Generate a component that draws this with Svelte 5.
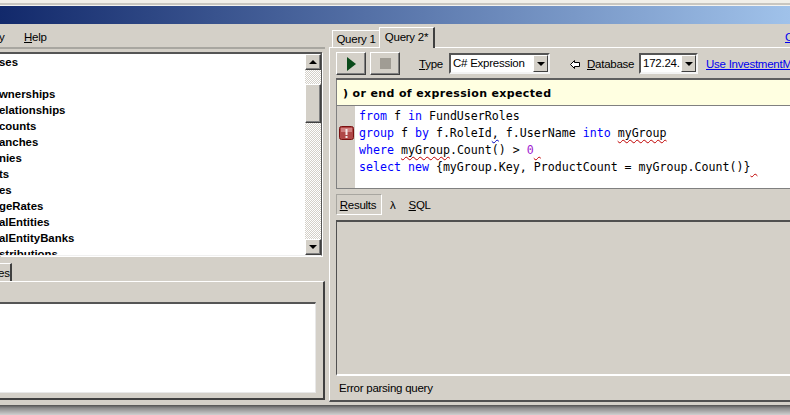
<script>
  const tables = [
    'ses', '', 'wnerships', 'elationships', 'counts', 'anches', 'nies', 'ts', 'es',
    'geRates', 'alEntities', 'alEntityBanks', 'stributions',
  ];
</script>

<div class="window">
  <div class="top-strip"></div>
  <div class="titlebar"></div>

  <div class="body">
    <div class="left">
      <div class="menu">
        <span class="menu-cut">y</span>
        <span class="menu-help"><u>H</u>elp</span>
      </div>

      <div class="list-box">
        <div class="list">
          {#each tables as name}
            <div class="row">{name}</div>
          {/each}
        </div>
        <div class="scrollbar">
          <div class="sb-btn"><span class="arrow-up"></span></div>
          <div class="sb-track">
            <div class="sb-thumb"></div>
          </div>
          <div class="sb-btn"><span class="arrow-down"></span></div>
        </div>
      </div>

      <div class="left-tabs">
        <div class="left-tab">es</div>
      </div>
      <div class="left-panel">
        <div class="left-white"></div>
      </div>
    </div>

    <div class="right">
      <div class="tabs">
        <div class="tab">Query 1</div>
        <div class="tab tab--active">Query 2*</div>
        <a class="corner-link" href="#top">C</a>
      </div>

      <div class="panel">
        <div class="toolbar">
          <button class="tool" type="button" aria-label="Run"><span class="play"></span></button>
          <button class="tool" type="button" aria-label="Stop"><span class="stop"></span></button>
          <span class="label label--type"><u>T</u>ype</span>
          <div class="combo combo--type">
            <span class="combo-text">C# Expression</span>
            <span class="combo-btn"><span class="arrow-down"></span></span>
          </div>
          <svg class="back" width="10" height="9" viewBox="0 0 10 9">
            <path d="M4.5 .5 L.5 4.5 L4.5 8.5 V6.5 H9.5 V2.5 H4.5 Z" fill="#fff" stroke="#000" stroke-width="1" />
          </svg>
          <span class="label label--db"><u>D</u>atabase</span>
          <div class="combo combo--db">
            <span class="combo-text">172.24.</span>
            <span class="combo-btn"><span class="arrow-down"></span></span>
          </div>
          <a class="use-link" href="#top">Use InvestmentManagement</a>
        </div>

        <div class="message">) or end of expression expected</div>

        <div class="editor">
          <div class="gutter">
            <svg class="err-icon" width="15" height="14" viewBox="0 0 15 14">
              <rect x=".5" y=".5" width="14" height="13" rx="2" fill="#b04848" stroke="#7a1010" />
              <rect x="2" y="2" width="11" height="4" fill="#d08080" />
              <rect x="6.5" y="3" width="2" height="6" fill="#f4e8e8" />
              <rect x="6.5" y="10" width="2" height="2" fill="#f4e8e8" />
            </svg>
          </div>
          <pre class="code"><span class="kw">from</span> f <span class="kw">in</span> FundUserRoles
<span class="kw">group</span> f <span class="kw">by</span> f.RoleId<span class="warn">,</span> f.UserName <span class="kw">into</span> <span class="err">myGroup</span>
<span class="kw">where</span> <span class="err">myGroup</span>.Count() &gt; <span class="num">0</span><span class="err">&nbsp;</span>
<span class="kw">select</span> <span class="kw">new</span> {'{'}myGroup.Key, ProductCount = myGroup.Count(){'}'}<span class="err">&nbsp;</span></pre>
        </div>

        <div class="result-tabs">
          <div class="rtab rtab--active"><u>R</u>esults</div>
          <div class="rtab rtab--lambda">λ</div>
          <div class="rtab"><u>S</u>QL</div>
        </div>

        <div class="results"></div>
        <div class="status">Error parsing query</div>
      </div>
    </div>
  </div>

  <div class="bottom-shadow"></div>
</div>

<style>
  :global(body) {
    margin: 0;
    background: #d4d0c8;
  }

  .window {
    width: 790px;
    height: 415px;
    overflow: hidden;
    display: flex;
    flex-direction: column;
    background: #d4d0c8;
    font-family: "Liberation Sans", Arial, sans-serif;
    font-size: 11.5px;
    letter-spacing: -0.25px;
    color: #000;
  }

  .top-strip {
    height: 3px;
    padding-bottom: 2px;
    border-bottom: 1px solid #f4f3ef;
    background: #f1efe9;
    box-shadow: inset 0 -2px 0 #c8c6c0;
  }

  .titlebar {
    height: 18px;
    background: linear-gradient(90deg, #12296b, #a0c2ea);
  }

  .body {
    display: flex;
    height: 378px;
  }

  /* left side: table tree + bottom tab panel */
  .left {
    width: 329px;
    flex: none;
    box-sizing: border-box;
  }

  .menu {
    height: 25px;
    box-sizing: border-box;
    display: flex;
    align-items: center;
    padding-top: 3px;
    border-bottom: 2px solid #a8a6a0;
    margin-right: 4px;
  }

  .menu-cut {
    width: 25px;
    margin-left: -1px;
  }

  .list-box {
    display: flex;
    height: 204px;
    width: 322px;
    margin-top: 3px;
    box-sizing: border-box;
    background: #fff;
    border-top: 2px solid #555;
    border-right: 1px solid #555;
    border-bottom: 1px solid #f0f0f0;
    box-shadow: 1px 1px 0 #fff;
  }

  .list {
    flex: 1;
    overflow: hidden;
    font-weight: 700;
    font-size: 11.4px;
    letter-spacing: 0;
  }

  .row {
    height: 16px;
    line-height: 16px;
    margin-left: -1px;
  }

  .scrollbar {
    width: 16px;
    display: flex;
    flex-direction: column;
  }

  .sb-btn {
    height: 16px;
    flex: none;
    box-sizing: border-box;
    background: #d4d0c8;
    border: 1px solid;
    border-color: #fff #404040 #404040 #fff;
    box-shadow: inset -1px -1px 0 #808080;
    display: flex;
    align-items: center;
    justify-content: center;
  }

  .sb-track {
    flex: 1;
    padding-top: 14px;
    background: repeating-conic-gradient(#fff 0 25%, #d4d0c8 0 50%) 0 0 / 2px 2px;
  }

  .sb-thumb {
    height: 39px;
    box-sizing: border-box;
    background: #d4d0c8;
    border: 1px solid;
    border-color: #fff #404040 #404040 #fff;
    box-shadow: inset -1px -1px 0 #808080;
  }

  .arrow-up,
  .arrow-down {
    width: 0;
    height: 0;
    border-left: 4px solid transparent;
    border-right: 4px solid transparent;
  }

  .arrow-up {
    border-bottom: 4px solid #000;
  }

  .arrow-down {
    border-top: 4px solid #000;
  }

  .left-tabs {
    height: 25px;
    display: flex;
    align-items: flex-end;
  }

  .left-tab {
    width: 12px;
    height: 18px;
    line-height: 19px;
    box-sizing: border-box;
    text-indent: -2px;
    border-top: 1px solid #fff;
    border-right: 2px solid #404040;
    overflow: hidden;
  }

  .left-panel {
    width: 325px;
    height: 119px;
    box-sizing: border-box;
    padding: 20px 7px 6px 0;
    border-top: 1px solid #fff;
    border-right: 2px solid #404040;
    border-bottom: 2px solid #404040;
  }

  .left-white {
    height: 91px;
    box-sizing: border-box;
    background: #fff;
    border-top: 2px solid #555;
    border-right: 1px solid #e8e8e8;
    border-bottom: 1px solid #e8e8e8;
  }

  /* right side: query tabs */
  .right {
    flex: 1;
    min-width: 0;
    display: flex;
    flex-direction: column;
  }

  .tabs {
    height: 23px;
    flex: none;
    display: flex;
    align-items: flex-end;
    padding-left: 3px;
    position: relative;
  }

  .tab {
    height: 17px;
    line-height: 16px;
    width: 47px;
    box-sizing: border-box;
    text-align: center;
    border-top: 1px solid #fff;
    border-left: 1px solid #fff;
  }

  .tab--active {
    height: 21px;
    width: 56px;
    line-height: 19px;
    margin-bottom: -1px;
    background: #d4d0c8;
    border-right: 2px solid #404040;
    position: relative;
    z-index: 1;
  }

  .corner-link {
    position: absolute;
    left: 456px;
    top: 7px;
    color: #0000ee;
  }

  .panel {
    flex: 1;
    min-height: 0;
    box-sizing: border-box;
    border-top: 1px solid #fff;
    border-left: 1px solid #fff;
    border-bottom: 2px solid #505050;
    padding-left: 6px;
    display: flex;
    flex-direction: column;
  }

  .toolbar {
    height: 30px;
    flex: none;
    display: flex;
    align-items: flex-start;
    padding-top: 4px;
    box-sizing: border-box;
    white-space: nowrap;
    overflow: hidden;
  }

  .toolbar > * {
    flex: none;
  }

  .tool {
    width: 30px;
    height: 23px;
    margin: 0 4px 0 0;
    padding: 0;
    box-sizing: border-box;
    background: #d4d0c8;
    border: 1px solid;
    border-color: #fff #404040 #404040 #fff;
    box-shadow: inset -1px -1px 0 #808080;
    display: flex;
    align-items: center;
    justify-content: center;
  }

  .play {
    width: 0;
    height: 0;
    border-left: 9px solid #0a4a1a;
    border-top: 7px solid transparent;
    border-bottom: 7px solid transparent;
  }

  .stop {
    width: 11px;
    height: 11px;
    background: #a09c94;
  }

  .label {
    line-height: 25px;
  }

  .label--type {
    margin-left: 15px;
    width: 30px;
  }

  .combo {
    height: 21px;
    margin-top: 1px;
    box-sizing: border-box;
    display: flex;
    justify-content: space-between;
    background: #fff;
    border: 2px solid;
    border-color: #555 #f4f4f4 #f4f4f4 #555;
    line-height: 17px;
    overflow: hidden;
  }

  .combo--type {
    width: 101px;
  }

  .combo--db {
    width: 59px;
  }

  .combo-text {
    padding-left: 2px;
    overflow: hidden;
  }

  .combo-btn {
    width: 15px;
    flex: none;
    box-sizing: border-box;
    background: #d4d0c8;
    border: 1px solid;
    border-color: #fff #404040 #404040 #fff;
    display: flex;
    align-items: center;
    justify-content: center;
  }

  .back {
    margin: 8px 7px 0 20px;
  }

  .label--db {
    width: 52px;
  }

  .use-link {
    margin-left: 8px;
    line-height: 25px;
    color: #0000ee;
  }

  .message {
    height: 28px;
    flex: none;
    box-sizing: border-box;
    line-height: 27px;
    padding-left: 7px;
    background: #ffffe1;
    border-top: 2px solid #606060;
    border-bottom: 1px solid #808080;
    box-shadow: inset 1px 0 0 #808080;
    font-family: "DejaVu Sans", sans-serif;
    font-weight: 700;
    font-size: 11px;
    letter-spacing: 0.36px;
  }

  .editor {
    height: 83px;
    flex: none;
    box-sizing: border-box;
    display: flex;
    background: #fff;
    border-left: 1px solid #808080;
    border-bottom: 1px solid #808080;
  }

  .gutter {
    width: 18px;
    flex: none;
    background: #d4d0c8;
    padding: 20px 0 0 2px;
    box-sizing: border-box;
  }

  .err-icon {
    display: block;
  }

  .code {
    margin: 0;
    padding: 2px 0 0 4px;
    font-family: "DejaVu Sans Mono", monospace;
    font-size: 11.62px;
    line-height: 17px;
    letter-spacing: 0;
  }

  .kw {
    color: #0000ff;
  }

  .num {
    color: #a020d0;
  }

  .err {
    text-decoration: underline wavy #c00000 1px;
    text-underline-offset: 2px;
  }

  .warn {
    text-decoration: underline wavy #0000c0 1px;
    text-underline-offset: 2px;
  }

  .result-tabs {
    height: 31px;
    flex: none;
    display: flex;
    align-items: flex-end;
    padding-bottom: 5px;
    box-sizing: border-box;
  }

  .rtab {
    height: 21px;
    line-height: 23px;
  }

  .rtab--active {
    width: 46px;
    box-sizing: border-box;
    text-align: center;
    border: 1px solid;
    border-color: #a8a6a0 #fff #fff #a8a6a0;
    line-height: 21px;
    padding-right: 2px;
    margin-right: 8px;
  }

  .rtab--lambda {
    margin-right: 13px;
  }

  .results {
    flex: 1;
    border-top: 2px solid #505050;
    border-left: 1px solid #505050;
    border-bottom: 2px solid #fff;
  }

  .status {
    height: 24px;
    flex: none;
    line-height: 24px;
    padding-left: 3px;
  }

  .bottom-shadow {
    flex: 1;
    margin-top: 3px;
    background: linear-gradient(#505050, #8a8a8a 30%, #d0d0d0);
  }
</style>
